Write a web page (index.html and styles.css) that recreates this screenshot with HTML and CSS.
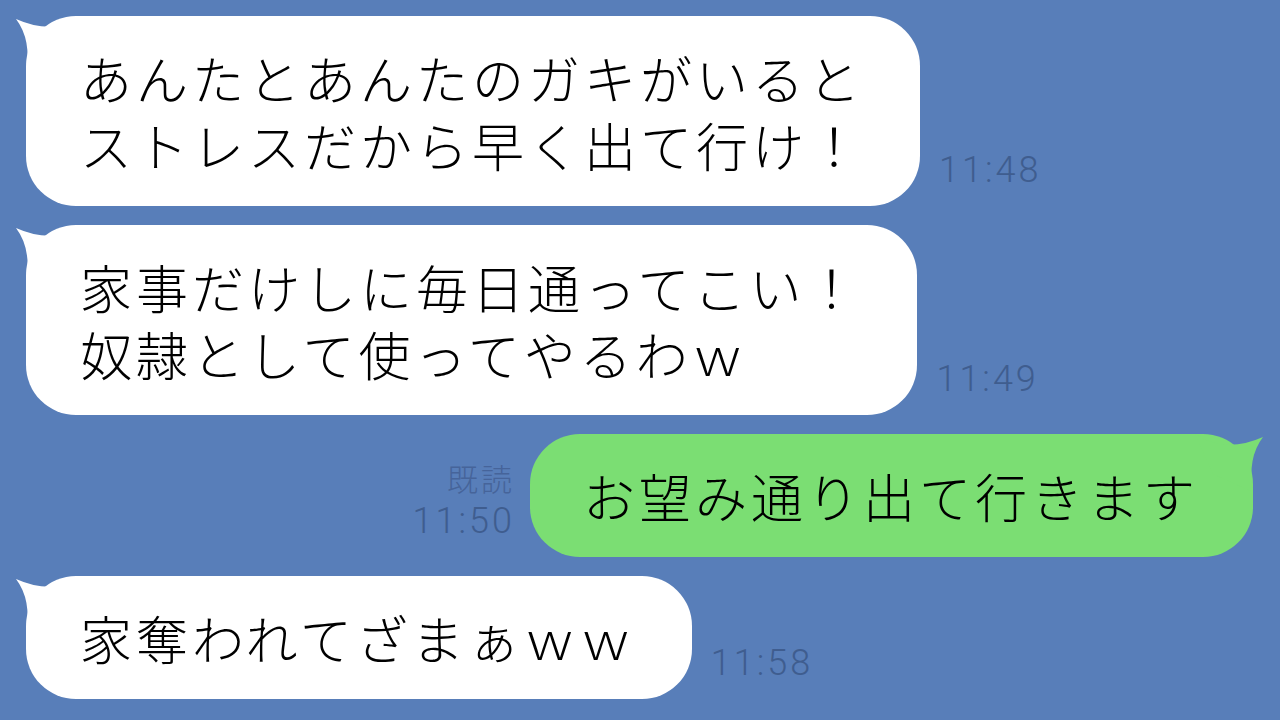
FILE: index.html
```html
<!DOCTYPE html>
<html lang="ja">
<head>
<meta charset="utf-8">
<link rel="stylesheet" href="styles.css">
</head>
<body>
<main class="chat">
  <div class="row row-left">
    <div class="bubble bubble-white">
      <svg class="tail tail-left" viewBox="-14 0 74 60" width="74" height="60"><path d="M58 0 Q28 20 -10 3 Q6 24 0 58 L40 40 Z"/></svg>
      <p class="msg"><span class="line">あんたとあんたのガキがいると</span><span class="line">ストレスだから早く出て行け！</span></p>
    </div>
    <div class="meta meta-left"><span class="time">11:48</span></div>
  </div>

  <div class="row row-left">
    <div class="bubble bubble-white">
      <svg class="tail tail-left" viewBox="-14 0 74 60" width="74" height="60"><path d="M58 0 Q28 20 -10 3 Q6 24 0 58 L40 40 Z"/></svg>
      <p class="msg"><span class="line">家事だけしに毎日通ってこい！</span><span class="line">奴隷として使ってやるわｗ</span></p>
    </div>
    <div class="meta meta-left"><span class="time">11:49</span></div>
  </div>

  <div class="row row-right">
    <div class="meta meta-right">
      <span class="read">既読</span>
      <span class="time">11:50</span>
    </div>
    <div class="bubble bubble-green">
      <svg class="tail tail-right" viewBox="-14 0 74 60" width="74" height="60"><path d="M58 0 Q28 20 -10 3 Q6 24 0 58 L40 40 Z"/></svg>
      <p class="msg"><span class="line">お望み通り出て行きます</span></p>
    </div>
  </div>

  <div class="row row-left">
    <div class="bubble bubble-white">
      <svg class="tail tail-left" viewBox="-14 0 74 60" width="74" height="60"><path d="M58 0 Q28 20 -10 3 Q6 24 0 58 L40 40 Z"/></svg>
      <p class="msg"><span class="line">家奪われてざまぁｗｗ</span></p>
    </div>
    <div class="meta meta-left"><span class="time">11:58</span></div>
  </div>
</main>
</body>
</html>
```

FILE: styles.css
```css
html, body {
  margin: 0;
  padding: 0;
}

body {
  width: 1280px;
  height: 720px;
  overflow: hidden;
  background: #587eb9;
  font-family: "Noto Sans CJK JP", "Noto Sans", sans-serif;
}

.chat {
  display: flex;
  flex-direction: column;
  gap: 19px;
  padding-top: 16px;
}

.row {
  display: flex;
  align-items: flex-end;
}

.row-left {
  padding-left: 26px;
}

.row-right {
  justify-content: flex-end;
  padding-right: 27px;
}

.bubble {
  position: relative;
  border-radius: 50px;
  padding: 28px 56px 28px 54px;
}

.bubble-white {
  background: #ffffff;
}

.bubble-green {
  background: #7bde73;
  padding-left: 53px;
  padding-right: 54px;
}

.tail {
  position: absolute;
  top: 0;
  overflow: visible;
}

.bubble-white .tail path {
  fill: #ffffff;
}

.bubble-green .tail path {
  fill: #7bde73;
}

.tail-left {
  left: -14px;
}

.tail-right {
  right: -14px;
  transform: scaleX(-1);
}

.msg {
  margin: 0;
  display: flex;
  flex-direction: column;
  font-size: 52px;
  font-weight: 300;
  letter-spacing: 4px;
  color: #000000;
  white-space: nowrap;
}

.line {
  display: block;
  height: 67px;
  line-height: 67px;
}

.meta {
  display: flex;
  flex-direction: column;
  margin-bottom: 18px;
  color: #3f5d8f;
}

.meta-left {
  margin-left: 19px;
}

.meta-right {
  align-items: flex-end;
  margin-right: 15px;
}

.time {
  font-family: Roboto, "Liberation Sans", sans-serif;
  font-weight: 300;
  font-size: 36px;
  line-height: 35px;
  letter-spacing: 3px;
}

.read {
  font-family: "Noto Sans CJK JP", sans-serif;
  font-weight: 300;
  font-size: 31px;
  line-height: 34px;
  letter-spacing: 3px;
  margin-bottom: 9px;
  color: #46649a;
}
```
